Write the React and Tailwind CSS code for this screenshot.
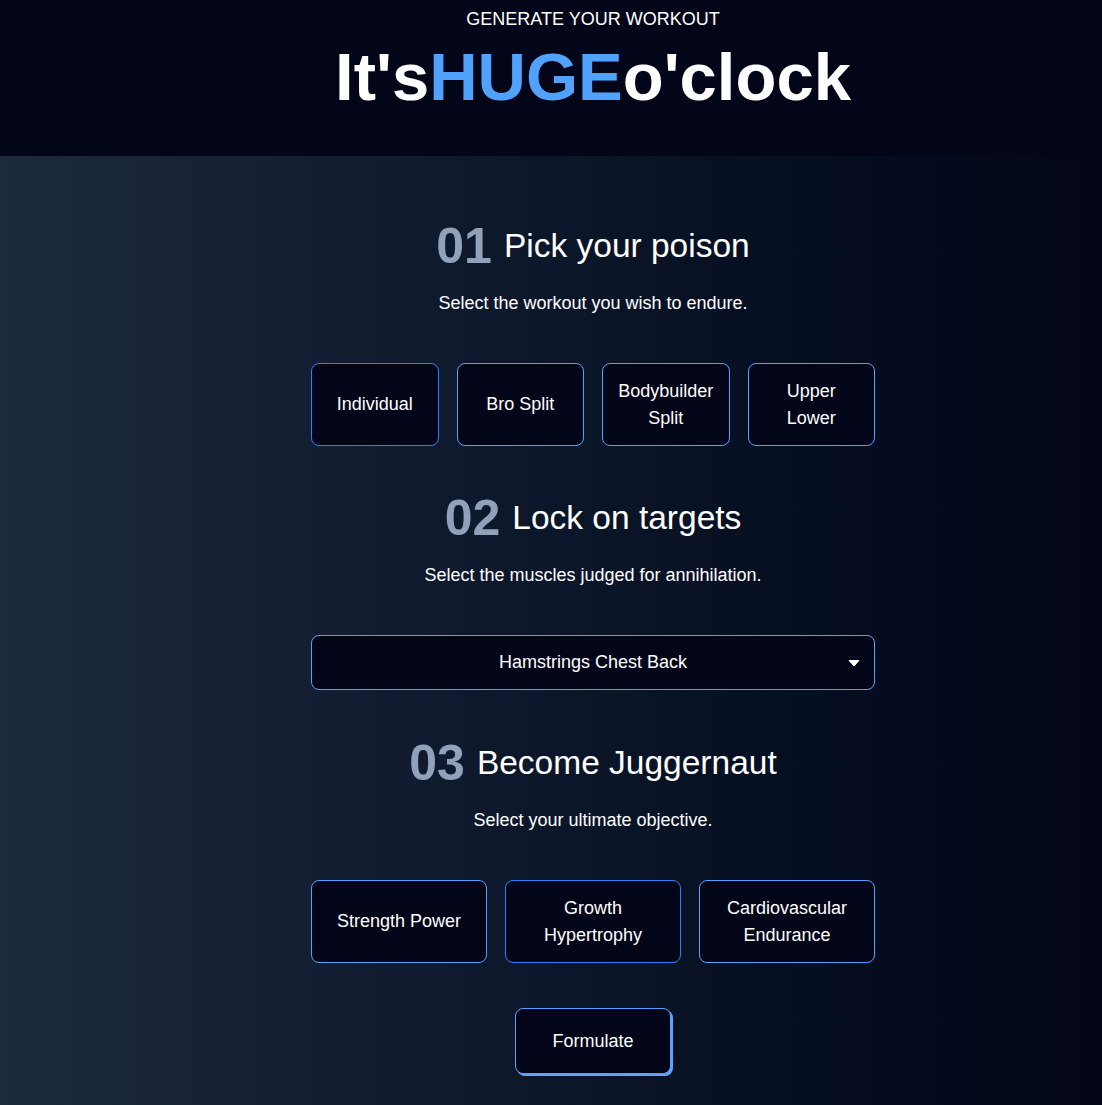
import React from "react";

const font = { fontFamily: '"Liberation Sans", Arial, sans-serif' };

function SectionTitle({ num, text }) {
  return (
    <div className="flex items-center gap-[12px] h-[60px]">
      <span className="text-[50px] font-bold text-slate-400 leading-none">{num}</span>
      <span className="text-[33.5px] text-white leading-none">{text}</span>
    </div>
  );
}

function Btn({ children, dark }) {
  return (
    <button
      className={
        "flex items-center justify-center text-center h-[83px] rounded-lg border bg-slate-950 text-white text-[18px] leading-[27px] px-3 " +
        (dark ? "border-blue-500" : "border-blue-400")
      }
    >
      {children}
    </button>
  );
}

export default function App() {
  return (
    <div style={font} className="min-h-[1105px] w-full flex flex-col">
      <header className="bg-slate-950 h-[156px] pl-[84px] flex flex-col items-center">
        <p className="text-[18px] leading-[27px] text-white mt-[6px]">GENERATE YOUR WORKOUT</p>
        <h1 className="text-[67px] font-bold leading-none text-white mt-[10px]">
          It's<span className="text-blue-400">HUGE</span>o'clock
        </h1>
      </header>
      <main className="flex-1 bg-gradient-to-r from-slate-800 to-slate-950 pl-[84px] pt-[60px] pb-[30px] flex flex-col items-center">
        <div className="w-[564px] flex flex-col items-center">
          <SectionTitle num="01" text="Pick your poison" />
          <p className="mt-[13.5px] text-[18px] leading-[27px] text-white">Select the workout you wish to endure.</p>
          <div className="mt-[46.5px] w-full grid grid-cols-4 gap-[18px]">
            <Btn dark>Individual</Btn>
            <Btn>Bro Split</Btn>
            <Btn>Bodybuilder<br />Split</Btn>
            <Btn>Upper<br />Lower</Btn>
          </div>

          <div className="mt-[42px]">
            <SectionTitle num="02" text="Lock on targets" />
          </div>
          <p className="mt-[13.5px] text-[18px] leading-[27px] text-white">Select the muscles judged for annihilation.</p>
          <div className="mt-[46.5px] w-full h-[55px] rounded-lg border border-blue-400 bg-slate-950 relative flex items-center justify-center">
            <span className="text-[18px] text-white">Hamstrings Chest Back</span>
            <svg className="absolute right-[14px] top-[23px]" width="12" height="8" viewBox="0 0 12 8">
              <path d="M1 1.5 L11 1.5 L6 7 Z" fill="white" stroke="white" strokeWidth="1" strokeLinejoin="round" />
            </svg>
          </div>

          <div className="mt-[43px]">
            <SectionTitle num="03" text="Become Juggernaut" />
          </div>
          <p className="mt-[13.5px] text-[18px] leading-[27px] text-white">Select your ultimate objective.</p>
          <div className="mt-[46.5px] w-full grid grid-cols-3 gap-[18px]">
            <Btn>Strength Power</Btn>
            <Btn dark>Growth<br />Hypertrophy</Btn>
            <Btn>Cardiovascular<br />Endurance</Btn>
          </div>

          <button className="mt-[45px] w-[156px] h-[66px] rounded-lg border border-blue-400 bg-slate-950 text-white text-[18px] shadow-[2px_2px_0_0_#60a5fa]">
            Formulate
          </button>
        </div>
      </main>
    </div>
  );
}
